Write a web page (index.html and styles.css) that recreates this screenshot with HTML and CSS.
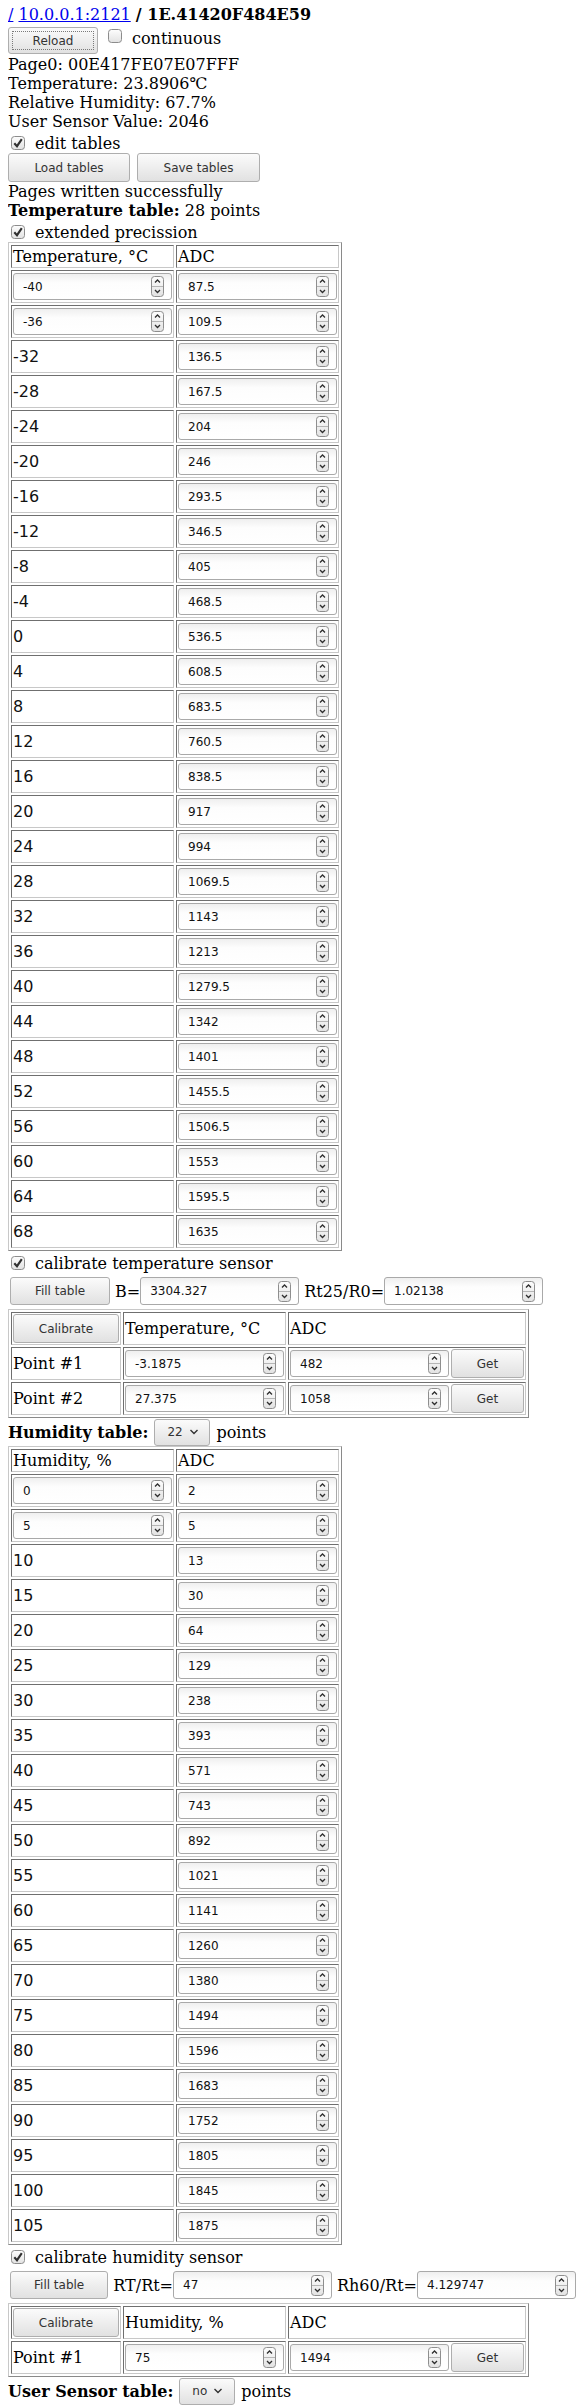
FILE: index.html
```html
<!DOCTYPE html>
<html>
<head>
<meta charset="utf-8">
<link rel="stylesheet" href="styles.css">
</head>
<body>
<svg class="defs" width="0" height="0">
  <defs>
    <linearGradient id="gbtn" x1="0" y1="0" x2="0" y2="1">
      <stop offset="0" stop-color="#fdfdfd"/>
      <stop offset="1" stop-color="#e2e2e2"/>
    </linearGradient>
    <symbol id="spin" viewBox="0 0 13 21">
      <rect x="0.5" y="0.5" width="12" height="20" rx="3" fill="url(#gbtn)" stroke="#8e8e8e"/>
      <line x1="1" y1="10.5" x2="12" y2="10.5" stroke="#b5b5b5"/>
      <path d="M4 6.5 L6.5 4 L9 6.5" fill="none" stroke="#2e2e2e" stroke-width="1.3"/>
      <path d="M4 14 L6.5 16.5 L9 14" fill="none" stroke="#2e2e2e" stroke-width="1.3"/>
    </symbol>
    <symbol id="cbon" viewBox="0 0 14 14">
      <rect x="0.5" y="0.5" width="13" height="13" rx="3" fill="url(#gbtn)" stroke="#8c8c8c"/>
      <path d="M3.3 7.2 L6 10.2 L10.8 3.2" fill="none" stroke="#303030" stroke-width="2.1"/>
    </symbol>
    <symbol id="cboff" viewBox="0 0 14 14">
      <rect x="0.5" y="0.5" width="13" height="13" rx="3" fill="url(#gbtn)" stroke="#8c8c8c"/>
    </symbol>
    <symbol id="chev" viewBox="0 0 10 6">
      <path d="M1.5 1 L5 4.5 L8.5 1" fill="none" stroke="#333" stroke-width="1.4"/>
    </symbol>
  </defs>
</svg>

<div class="title"><a href="#">/</a> <a href="#">10.0.0.1:2121</a> <b>/ 1E.41420F484E59</b></div>

<div class="bar bar-reload">
  <button class="btn btn-reload"><span class="focus">Reload</span></button>
  <svg class="cb cb-top"><use href="#cboff"/></svg>
  <span class="cblabel">continuous</span>
</div>

<div class="line">Page0: 00E417FE07E07FFF</div>
<div class="line">Temperature: 23.8906℃</div>
<div class="line">Relative Humidity: 67.7%</div>
<div class="line">User Sensor Value: 2046</div>

<div class="cbline"><svg class="cb"><use href="#cbon"/></svg><span class="cblabel">edit tables</span></div>

<div class="bar bar-load">
  <button class="btn btn-load">Load tables</button>
  <button class="btn btn-save">Save tables</button>
</div>

<div class="line">Pages written successfully</div>
<div class="line"><b>Temperature table:</b> 28 points</div>

<div class="cbline"><svg class="cb"><use href="#cbon"/></svg><span class="cblabel">extended precission</span></div>

<table class="grid tbl">
  <tr><td class="hd">Temperature, °C</td><td class="hd">ADC</td></tr>
  <tr><td><span class="num"><span class="v">-40</span><svg class="sp"><use href="#spin"/></svg></span></td><td><span class="num"><span class="v">87.5</span><svg class="sp"><use href="#spin"/></svg></span></td></tr>
  <tr><td><span class="num"><span class="v">-36</span><svg class="sp"><use href="#spin"/></svg></span></td><td><span class="num"><span class="v">109.5</span><svg class="sp"><use href="#spin"/></svg></span></td></tr>
  <tr><td class="tx">-32</td><td><span class="num"><span class="v">136.5</span><svg class="sp"><use href="#spin"/></svg></span></td></tr>
  <tr><td class="tx">-28</td><td><span class="num"><span class="v">167.5</span><svg class="sp"><use href="#spin"/></svg></span></td></tr>
  <tr><td class="tx">-24</td><td><span class="num"><span class="v">204</span><svg class="sp"><use href="#spin"/></svg></span></td></tr>
  <tr><td class="tx">-20</td><td><span class="num"><span class="v">246</span><svg class="sp"><use href="#spin"/></svg></span></td></tr>
  <tr><td class="tx">-16</td><td><span class="num"><span class="v">293.5</span><svg class="sp"><use href="#spin"/></svg></span></td></tr>
  <tr><td class="tx">-12</td><td><span class="num"><span class="v">346.5</span><svg class="sp"><use href="#spin"/></svg></span></td></tr>
  <tr><td class="tx">-8</td><td><span class="num"><span class="v">405</span><svg class="sp"><use href="#spin"/></svg></span></td></tr>
  <tr><td class="tx">-4</td><td><span class="num"><span class="v">468.5</span><svg class="sp"><use href="#spin"/></svg></span></td></tr>
  <tr><td class="tx">0</td><td><span class="num"><span class="v">536.5</span><svg class="sp"><use href="#spin"/></svg></span></td></tr>
  <tr><td class="tx">4</td><td><span class="num"><span class="v">608.5</span><svg class="sp"><use href="#spin"/></svg></span></td></tr>
  <tr><td class="tx">8</td><td><span class="num"><span class="v">683.5</span><svg class="sp"><use href="#spin"/></svg></span></td></tr>
  <tr><td class="tx">12</td><td><span class="num"><span class="v">760.5</span><svg class="sp"><use href="#spin"/></svg></span></td></tr>
  <tr><td class="tx">16</td><td><span class="num"><span class="v">838.5</span><svg class="sp"><use href="#spin"/></svg></span></td></tr>
  <tr><td class="tx">20</td><td><span class="num"><span class="v">917</span><svg class="sp"><use href="#spin"/></svg></span></td></tr>
  <tr><td class="tx">24</td><td><span class="num"><span class="v">994</span><svg class="sp"><use href="#spin"/></svg></span></td></tr>
  <tr><td class="tx">28</td><td><span class="num"><span class="v">1069.5</span><svg class="sp"><use href="#spin"/></svg></span></td></tr>
  <tr><td class="tx">32</td><td><span class="num"><span class="v">1143</span><svg class="sp"><use href="#spin"/></svg></span></td></tr>
  <tr><td class="tx">36</td><td><span class="num"><span class="v">1213</span><svg class="sp"><use href="#spin"/></svg></span></td></tr>
  <tr><td class="tx">40</td><td><span class="num"><span class="v">1279.5</span><svg class="sp"><use href="#spin"/></svg></span></td></tr>
  <tr><td class="tx">44</td><td><span class="num"><span class="v">1342</span><svg class="sp"><use href="#spin"/></svg></span></td></tr>
  <tr><td class="tx">48</td><td><span class="num"><span class="v">1401</span><svg class="sp"><use href="#spin"/></svg></span></td></tr>
  <tr><td class="tx">52</td><td><span class="num"><span class="v">1455.5</span><svg class="sp"><use href="#spin"/></svg></span></td></tr>
  <tr><td class="tx">56</td><td><span class="num"><span class="v">1506.5</span><svg class="sp"><use href="#spin"/></svg></span></td></tr>
  <tr><td class="tx">60</td><td><span class="num"><span class="v">1553</span><svg class="sp"><use href="#spin"/></svg></span></td></tr>
  <tr><td class="tx">64</td><td><span class="num"><span class="v">1595.5</span><svg class="sp"><use href="#spin"/></svg></span></td></tr>
  <tr><td class="tx">68</td><td><span class="num"><span class="v">1635</span><svg class="sp"><use href="#spin"/></svg></span></td></tr>
</table>

<div class="cbline"><svg class="cb"><use href="#cbon"/></svg><span class="cblabel">calibrate temperature sensor</span></div>

<div class="fillrow">
  <button class="btn btn-fill">Fill table</button>
  <span class="eq">B=</span>
  <span class="num"><span class="v">3304.327</span><svg class="sp"><use href="#spin"/></svg></span>
  <span class="eq">Rt25/R0=</span>
  <span class="num"><span class="v">1.02138</span><svg class="sp"><use href="#spin"/></svg></span>
</div>

<table class="grid cal">
  <tr><td class="c1"><button class="btn btn-cal">Calibrate</button></td><td class="hd">Temperature, °C</td><td class="hd">ADC</td></tr>
  <tr><td class="pt">Point #1</td><td><span class="num"><span class="v">-3.1875</span><svg class="sp"><use href="#spin"/></svg></span></td><td><div class="adc"><span class="num"><span class="v">482</span><svg class="sp"><use href="#spin"/></svg></span><button class="btn btn-get">Get</button></div></td></tr>
  <tr><td class="pt">Point #2</td><td><span class="num"><span class="v">27.375</span><svg class="sp"><use href="#spin"/></svg></span></td><td><div class="adc"><span class="num"><span class="v">1058</span><svg class="sp"><use href="#spin"/></svg></span><button class="btn btn-get">Get</button></div></td></tr>
</table>

<div class="selrow"><b>Humidity table:</b><span class="sel">22<svg class="chev"><use href="#chev"/></svg></span><span>points</span></div>

<table class="grid tbl">
  <tr><td class="hd">Humidity, %</td><td class="hd">ADC</td></tr>
  <tr><td><span class="num"><span class="v">0</span><svg class="sp"><use href="#spin"/></svg></span></td><td><span class="num"><span class="v">2</span><svg class="sp"><use href="#spin"/></svg></span></td></tr>
  <tr><td><span class="num"><span class="v">5</span><svg class="sp"><use href="#spin"/></svg></span></td><td><span class="num"><span class="v">5</span><svg class="sp"><use href="#spin"/></svg></span></td></tr>
  <tr><td class="tx">10</td><td><span class="num"><span class="v">13</span><svg class="sp"><use href="#spin"/></svg></span></td></tr>
  <tr><td class="tx">15</td><td><span class="num"><span class="v">30</span><svg class="sp"><use href="#spin"/></svg></span></td></tr>
  <tr><td class="tx">20</td><td><span class="num"><span class="v">64</span><svg class="sp"><use href="#spin"/></svg></span></td></tr>
  <tr><td class="tx">25</td><td><span class="num"><span class="v">129</span><svg class="sp"><use href="#spin"/></svg></span></td></tr>
  <tr><td class="tx">30</td><td><span class="num"><span class="v">238</span><svg class="sp"><use href="#spin"/></svg></span></td></tr>
  <tr><td class="tx">35</td><td><span class="num"><span class="v">393</span><svg class="sp"><use href="#spin"/></svg></span></td></tr>
  <tr><td class="tx">40</td><td><span class="num"><span class="v">571</span><svg class="sp"><use href="#spin"/></svg></span></td></tr>
  <tr><td class="tx">45</td><td><span class="num"><span class="v">743</span><svg class="sp"><use href="#spin"/></svg></span></td></tr>
  <tr><td class="tx">50</td><td><span class="num"><span class="v">892</span><svg class="sp"><use href="#spin"/></svg></span></td></tr>
  <tr><td class="tx">55</td><td><span class="num"><span class="v">1021</span><svg class="sp"><use href="#spin"/></svg></span></td></tr>
  <tr><td class="tx">60</td><td><span class="num"><span class="v">1141</span><svg class="sp"><use href="#spin"/></svg></span></td></tr>
  <tr><td class="tx">65</td><td><span class="num"><span class="v">1260</span><svg class="sp"><use href="#spin"/></svg></span></td></tr>
  <tr><td class="tx">70</td><td><span class="num"><span class="v">1380</span><svg class="sp"><use href="#spin"/></svg></span></td></tr>
  <tr><td class="tx">75</td><td><span class="num"><span class="v">1494</span><svg class="sp"><use href="#spin"/></svg></span></td></tr>
  <tr><td class="tx">80</td><td><span class="num"><span class="v">1596</span><svg class="sp"><use href="#spin"/></svg></span></td></tr>
  <tr><td class="tx">85</td><td><span class="num"><span class="v">1683</span><svg class="sp"><use href="#spin"/></svg></span></td></tr>
  <tr><td class="tx">90</td><td><span class="num"><span class="v">1752</span><svg class="sp"><use href="#spin"/></svg></span></td></tr>
  <tr><td class="tx">95</td><td><span class="num"><span class="v">1805</span><svg class="sp"><use href="#spin"/></svg></span></td></tr>
  <tr><td class="tx">100</td><td><span class="num"><span class="v">1845</span><svg class="sp"><use href="#spin"/></svg></span></td></tr>
  <tr><td class="tx">105</td><td><span class="num"><span class="v">1875</span><svg class="sp"><use href="#spin"/></svg></span></td></tr>
</table>

<div class="cbline"><svg class="cb"><use href="#cbon"/></svg><span class="cblabel">calibrate humidity sensor</span></div>

<div class="fillrow">
  <button class="btn btn-fill">Fill table</button>
  <span class="eq">RT/Rt=</span>
  <span class="num"><span class="v">47</span><svg class="sp"><use href="#spin"/></svg></span>
  <span class="eq">Rh60/Rt=</span>
  <span class="num"><span class="v">4.129747</span><svg class="sp"><use href="#spin"/></svg></span>
</div>

<table class="grid cal">
  <tr><td class="c1"><button class="btn btn-cal">Calibrate</button></td><td class="hd">Humidity, %</td><td class="hd">ADC</td></tr>
  <tr><td class="pt">Point #1</td><td><span class="num"><span class="v">75</span><svg class="sp"><use href="#spin"/></svg></span></td><td><div class="adc"><span class="num"><span class="v">1494</span><svg class="sp"><use href="#spin"/></svg></span><button class="btn btn-get">Get</button></div></td></tr>
</table>

<div class="selrow"><b>User Sensor table:</b><span class="sel">no<svg class="chev"><use href="#chev"/></svg></span><span>points</span></div>

</body>
</html>
```

FILE: styles.css
```css
* { box-sizing: border-box; }
html, body { background: #fff; }
body {
  margin: 5px 8px 0 8px;
  font: 16px/19px "DejaVu Serif", serif;
  color: #000;
}
.defs { position: absolute; width: 0; height: 0; }

.title { height: 19px; white-space: nowrap; }
.title a { color: #0000ee; text-decoration: underline; }

.line { height: 19px; white-space: nowrap; }

.bar { display: flex; align-items: flex-start; }
.bar-reload { margin-top: 3px; height: 28px; }
.bar-load { height: 29px; gap: 7px; }

.btn {
  font: 12px/14px "DejaVu Sans", sans-serif;
  color: #333;
  background: linear-gradient(#fbfbfb, #e1e1e1);
  border: 1px solid #aeaeae;
  border-radius: 3px;
  padding: 0;
  margin: 0;
  display: inline-flex;
  align-items: center;
  justify-content: center;
}
.btn-reload { width: 90px; height: 27px; }
.btn-reload .focus {
  display: flex; align-items: center; justify-content: center;
  width: 82px; height: 19px;
  border: 1px dotted #7a7a7a;
}
.btn-load { width: 122px; height: 29px; }
.btn-save { width: 123px; height: 29px; }
.btn-fill { width: 100px; height: 28px; margin-left: 2px; }
.btn-cal { width: 106px; height: 29px; }
.btn-get { width: 73px; height: 29px; margin-left: 2px; }

.cb { width: 14px; height: 14px; flex: none; }
.cb-top { margin: 2px 0 0 10px; }
.cblabel { margin: 2px 0 0 10px; white-space: nowrap; }

.cbline { display: flex; align-items: flex-start; height: 22px; }
.cbline .cb { margin: 5px 0 0 3px; }
.cbline .cblabel { margin: 3px 0 0 10px; }

.grid {
  border-collapse: separate;
  border-spacing: 2px;
  border: 1px solid;
  border-color: #c8c8c8 #8a8a8a #8a8a8a #c8c8c8;
}
.grid td {
  border: 1px solid;
  border-color: #6f6f6f #c8c8c8 #c8c8c8 #6f6f6f;
  padding: 1px;
  vertical-align: middle;
  white-space: nowrap;
}
.tbl td { width: 163px; }
.tbl td.hd { height: 23px; }
.tx { font: 16px/19px "DejaVu Sans", sans-serif; color: #111; }

.num {
  display: flex;
  align-items: center;
  width: 159px;
  height: 27px;
  margin: 1px 0;
  padding-left: 9px;
  border: 1px solid #a9a9a9;
  border-radius: 3px;
  background: linear-gradient(#efefef, #fdfdfd 35%, #fff);
  font: 12px/14px "DejaVu Sans", sans-serif;
  color: #111;
  flex: none;
}
.num .v { flex: 1; }
.num .sp { width: 13px; height: 21px; margin-right: 7px; flex: none; }

.fillrow { display: flex; align-items: center; height: 36px; }
.fillrow .num { margin: 0; height: 28px; }
.eq { margin: 0 0 0 5px; white-space: nowrap; }

.cal .c1 { width: 110px; }
.adc { display: flex; align-items: center; }

.selrow { display: flex; align-items: center; height: 28px; white-space: nowrap; }
.sel {
  display: inline-flex;
  align-items: center;
  height: 27px;
  width: 56px;
  margin: 0 6px 0 6px;
  padding: 0 0 0 12px;
  border: 1px solid #aeaeae;
  border-radius: 3px;
  background: linear-gradient(#fbfbfb, #e1e1e1);
  font: 12px/14px "DejaVu Sans", sans-serif;
  color: #333;
}
.chev { width: 10px; height: 6px; margin-left: 6px; }
```
